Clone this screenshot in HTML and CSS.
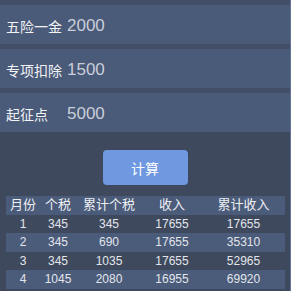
FILE: index.html
```html
<!DOCTYPE html>
<html lang="zh">
<head>
  <meta charset="UTF-8" />
  <meta name="viewport" content="width=device-width, initial-scale=1.0" />
  <title>个税计算</title>
  <link rel="stylesheet" href="styles.css">
</head>
<body>

  <div class="fields">
    <div class="field"><span class="label">五险一金</span><span class="value">2000</span></div>
    <div class="field"><span class="label">专项扣除</span><span class="value">1500</span></div>
    <div class="field"><span class="label">起征点</span><span class="value">5000</span></div>
  </div>

  <div class="actions">
    <button type="button">计算</button>
  </div>

  <table class="result">
    <colgroup>
      <col style="width:34px"><col style="width:36px"><col style="width:66px"><col style="width:60px"><col style="width:83px">
    </colgroup>
    <thead>
      <tr><th>月份</th><th>个税</th><th>累计个税</th><th>收入</th><th>累计收入</th></tr>
    </thead>
    <tbody>
      <tr><td>1</td><td>345</td><td>345</td><td>17655</td><td>17655</td></tr>
      <tr><td>2</td><td>345</td><td>690</td><td>17655</td><td>35310</td></tr>
      <tr><td>3</td><td>345</td><td>1035</td><td>17655</td><td>52965</td></tr>
      <tr><td>4</td><td>1045</td><td>2080</td><td>16955</td><td>69920</td></tr>
      <tr><td>5</td><td>1400</td><td>3480</td><td>16600</td><td>86520</td></tr>
    </tbody>
  </table>

</body>
</html>
```

FILE: styles.css
```css
html {
  height: 100%;
  overflow: hidden;
  border-right: 1px solid #66759a;
  background-color: #3e495d;
}

body {
  margin: 0;
  font-family: "Liberation Sans", "Noto Sans CJK SC", sans-serif;
  color: #eef0f4;
}

.fields {
  display: flex;
  flex-direction: column;
  gap: 5px;
  padding-top: 5px;
  background-color: #434e66;
}

.field {
  display: flex;
  align-items: center;
  height: 39px;
  padding: 3px 6px 0;
  box-sizing: border-box;
  background-color: #4a5a79;
}

.label {
  width: 61px;
  font-size: 14px;
  color: #f2f3f6;
}

.value {
  font-size: 17px;
  color: #c9ced8;
}

.actions {
  display: flex;
  justify-content: center;
  padding: 18px 0 11px;
}

button {
  width: 85px;
  height: 35px;
  border: none;
  border-radius: 4px;
  background-color: #6f98e0;
  color: #fff;
  font-family: "Noto Sans CJK SC", sans-serif;
  font-size: 14px;
  padding: 0;
}

.result {
  margin: 0 6px;
  width: 279px;
  border-collapse: collapse;
  table-layout: fixed;
  text-align: center;
}

.result th,
.result td {
  height: 18.5px;
  padding: 0;
  line-height: 18px;
}

.result th {
  font-size: 13px;
  font-weight: normal;
  color: #eef0f4;
  background-color: #4b5b7a;
}

.result td {
  font-size: 12px;
  color: #e2e6ec;
}

.result tbody tr:nth-child(even) td {
  background-color: #4b5b7a;
}
```
